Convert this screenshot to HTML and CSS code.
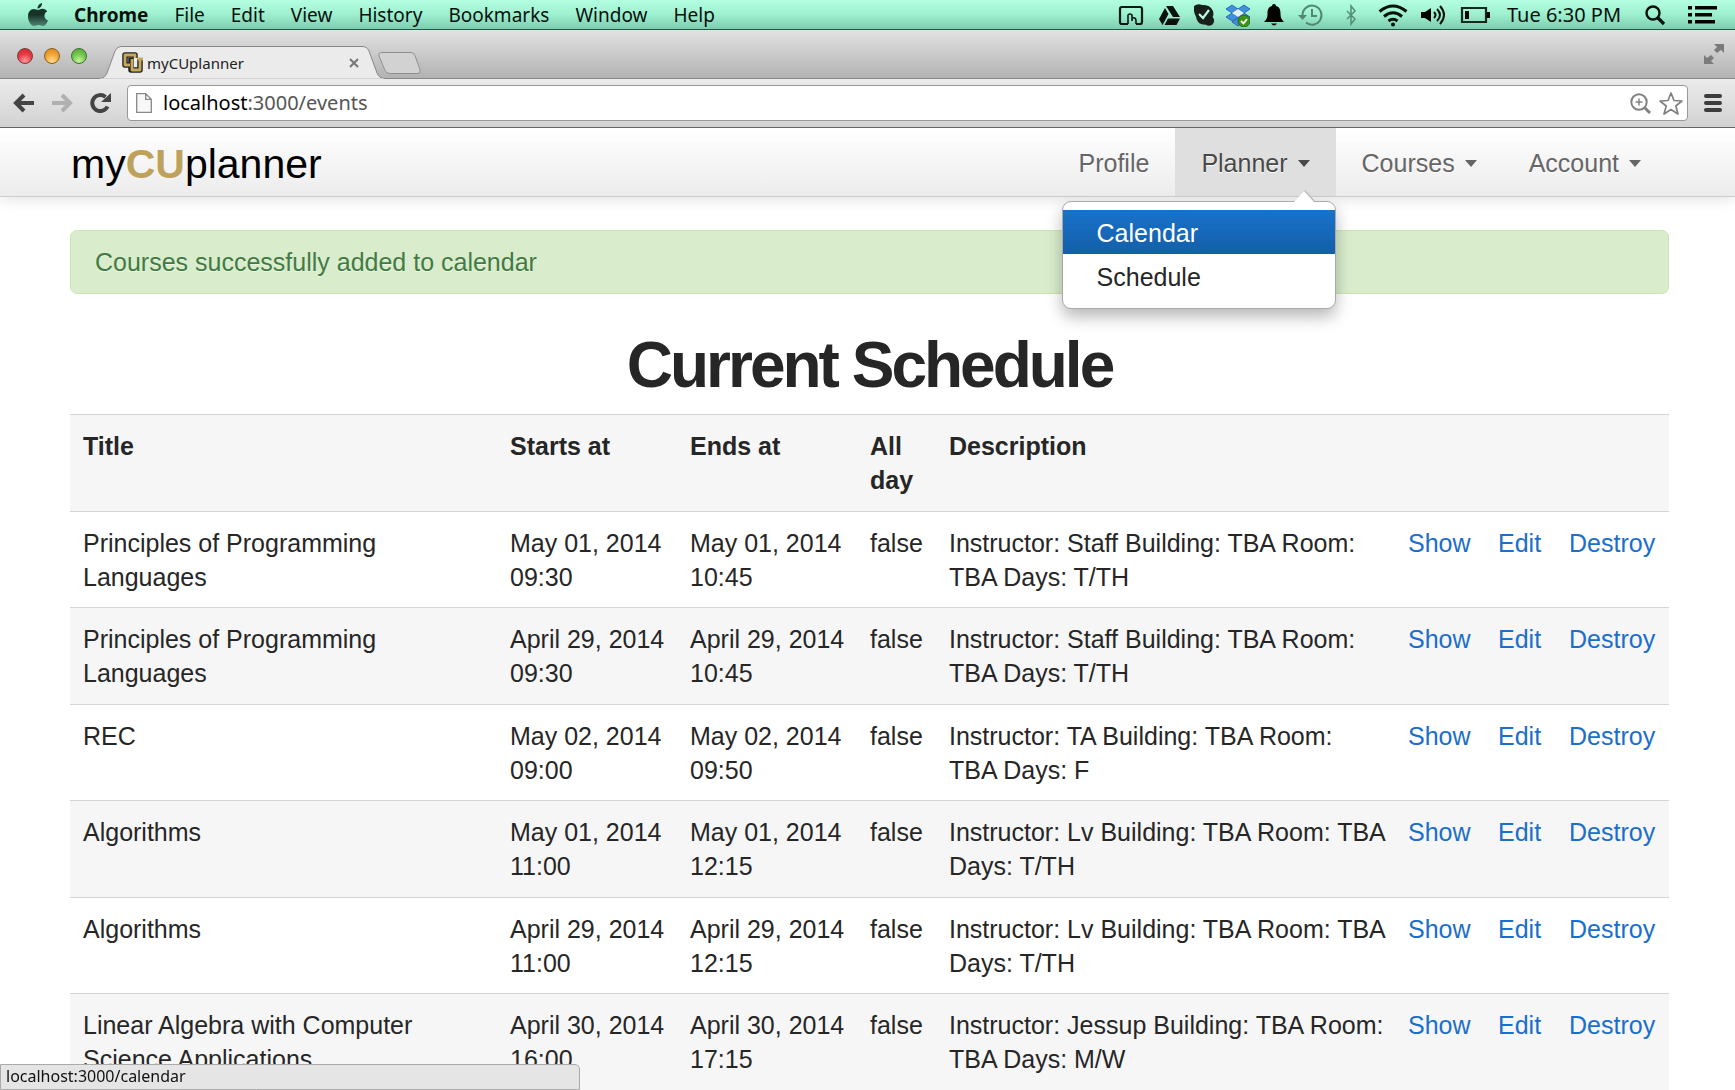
FILE: index.html
```html
<!DOCTYPE html>
<html lang="en">
<head>
<meta charset="utf-8">
<title>myCUplanner</title>
<link rel="stylesheet" href="styles.css">
</head>
<body>
<div class="menubar">
  <svg class="apple" width="22" height="24" viewBox="0 0 22 24"><defs><linearGradient id="ag" x1="0" y1="0" x2="0" y2="1"><stop offset="0" stop-color="#1d3a30"/><stop offset=".5" stop-color="#173128"/><stop offset="1" stop-color="#4d8672"/></linearGradient></defs><path fill="url(#ag)" d="M15 0c.3 3-2 5.500-4.500 5.500C10.300 3 12.500.6 15 0zM11 7c1.200 0 2.500-1.200 4.700-1.200 1.800 0 3.500 1 4.500 2.400-4 2.400-3.400 7.800.8 9.300-1 2.700-3 5.500-5 5.500-1.700 0-2.300-1-4.500-1s-2.900 1-4.500 1C3.500 23 1 17.600 1 13.500 1 8.800 3.700 6 6.700 6 8.500 6 10 7 11 7z"/></svg>
  <nav class="menus">
    <button class="app">Chrome</button><button>File</button><button>Edit</button><button>View</button><button>History</button><button>Bookmarks</button><button>Window</button><button>Help</button>
  </nav>
  <div class="tray">
    <svg width="26" height="24" viewBox="0 0 26 24" fill="none" stroke="#0b1a14"><path stroke-width="2.200" d="M10 21H4q-2 0-2-2V6q0-2 2-2h18q2 0 2 2v13q0 2-2 2h-4"/><path stroke-width="1.600" d="M10 21V12q2-2 4 0v6m0-3q4-1 4 3v3"/></svg>
    <svg width="26" height="24" viewBox="0 0 26 24" fill="#07110d"><path d="M10 3h7l7 11h-7zM9 5l3.500 6L6.500 22 3 16zM12 15.500h12L20.500 22H8.500z"/></svg>
    <svg width="20" height="24" viewBox="0 0 20 24"><path fill="#16211d" d="M0 3q4-3 8-1 8-1 11 6 1 4-.4 6Q22 18 18 22q-4 1.500-6-.3-9 .3-10-8Q-1 8 0 3z"/><path d="M5 11l4 4 6-8" fill="none" stroke="#bff6dd" stroke-width="2.200"/></svg>
    <svg width="24" height="24" viewBox="0 0 24 24"><g fill="#3f90e0" stroke="#1b5ca8" stroke-width=".8"><path d="M6 2l6 4-6 4-6-4zM18 2l6 4-6 4-6-4zM0 14l6-4 6 4-6 4zM12 14l6-4 6 4-6 4zM6 19l6-4 6 4-6 4z"/></g><path fill="#dff0fb" d="M6 10l6-4 6 4-6 4z"/><circle cx="18" cy="18" r="6" fill="#3d9416" stroke="#286b0c"/><path d="M15 18l2.500 2.500L21 16" fill="none" stroke="#fff" stroke-width="1.800"/></svg>
    <svg width="24" height="24" viewBox="0 0 24 24"><path d="M12 1q2 0 2 2c4 1 4.500 4 4.500 8 0 3 .5 5 3.500 8H2c3-3 3.500-5 3.500-8 0-4 .5-7 4.500-8q0-2 2-2zM9 20.500h6q-3 4-6 0z"/></svg>
    <svg width="26" height="24" viewBox="0 0 26 24" fill="none" stroke="#528672" stroke-width="2"><path d="M4.500 12A9.500 9.500 0 1 1 8 19.500M14 6v7h5"/><path d="M0 12h9l-4.500 5z" fill="#528672" stroke="none"/></svg>
    <svg width="30" height="24" viewBox="0 0 30 24" fill="none" stroke="#578b77" stroke-width="1.500"><path d="M11 8l8 8-4 5V3l4 5-8 8"/></svg>
    <svg width="30" height="24" viewBox="0 0 30 24" fill="none" stroke="#06110c" stroke-width="3"><path d="M1.500 8.500q13.500-11 27 0M6 13.500q9-7.500 18 0M10.500 18q4.500-3.500 9 0"/><circle cx="15" cy="21.500" r="1" stroke-width="2"/></svg>
    <svg width="26" height="24" viewBox="0 0 26 24"><path d="M1 9h4l6-4v14l-6-4H1z"/><path d="M14 9q3 3 0 6M17 6q6 6 0 12M20 3q8 9 0 18" fill="none" stroke="#06110c" stroke-width="2"/></svg>
    <svg width="34" height="24" viewBox="0 0 34 24"><path d="M4 5h24v14H4z" fill="none" stroke="#142a21" stroke-width="2.200"/><path d="M7 8h4v8H7zM29 9h3v6h-3z"/></svg>
    <span class="clock">Tue 6:30 PM</span>
    <svg width="40" height="24" viewBox="0 0 40 24" fill="none" stroke="#06110c"><circle cx="17" cy="10" r="6.500" stroke-width="2.400"/><path d="M22 15l6 6" stroke-width="3.200"/></svg>
    <svg width="29" height="24" viewBox="0 0 29 24"><path d="M0 3h4v3.500H0zM7 3h22v3.500H7zM0 10h4v3.500H0zM7 10h17v3.500H7zM0 17h4v3.500H0zM7 17h20v3.500H7z"/></svg>
  </div>
</div>

<div class="tabstrip">
  <div class="lights">
    <button class="light red" aria-label="Close window"></button><button class="light amber" aria-label="Minimize"></button><button class="light green" aria-label="Zoom"></button>
  </div>
  <div class="tab">
    <svg class="tab-shape" width="284" height="33" viewBox="0 0 284 33"><path d="M0 32.500Q5 32 7 27L15 5Q17 .5 21 .5H262Q267 .5 269 5L277 27Q279 32 284 32.500" fill="#ebebeb" stroke="#888"/><path d="M0 33h284" stroke="#ebebeb" stroke-width="1"/></svg>
    <svg width="22" height="22" viewBox="0 0 22 22"><g fill="none" stroke-linejoin="round"><path d="M13 6V3H3v10h7" stroke="#222" stroke-width="5.500"/><path d="M9 6v12h9V7" stroke="#222" stroke-width="5.500"/><path d="M13 6V3H3v10h5" stroke="#c7a95b" stroke-width="2.800"/><path d="M10 7v11h8V7M15.500 7H21" stroke="#c7a95b" stroke-width="2.800"/></g></svg>
    <span class="tab-title">myCUplanner</span>
    <button class="tab-close" aria-label="Close tab"><svg width="10" height="10" viewBox="0 0 10 10" stroke="#777" stroke-width="2"><path d="M1 1l8 8M9 1L1 9"/></svg></button>
  </div>
  <button class="newtab" aria-label="New tab"><svg width="44" height="22" viewBox="0 0 44 22"><path d="M4 .5h29q3 0 4 3l5 14q1 4-2 4H12q-4 0-5-3L1 4Q0 .5 4 .5z" fill="#d2d2d2" stroke="#8e8e8e"/></svg></button>
  <button class="full" aria-label="Full screen"><svg width="20" height="20" viewBox="0 0 20 20" fill="#7b7b7b"><path d="M10 0h10v9l-3-3-4 3-3-3 3-3zM10 20H0v-9l3 3 4-3 3 3-3 3z"/></svg></button>
</div>

<div class="toolbar">
  <button aria-label="Back"><svg width="22" height="20" viewBox="0 0 22 20" fill="none" stroke="#444" stroke-width="4"><path d="M21 10H4M11 2l-8 8 8 8"/></svg></button>
  <button aria-label="Forward"><svg width="22" height="20" viewBox="0 0 22 20" fill="none" stroke="#b0b0b0" stroke-width="4"><path d="M1 10h17M11 2l8 8-8 8"/></svg></button>
  <button aria-label="Reload"><svg width="22" height="20" viewBox="0 0 22 20"><path d="M18.500 13.500A8 8 0 1 1 16.500 4" fill="none" stroke="#444" stroke-width="4"/><path d="M22 0v9h-10z" fill="#444"/></svg></button>
  <div class="omnibox">
    <svg width="16" height="20" viewBox="0 0 16 20"><path d="M.7.700h9l5.600 5.600v13H.7zM9.700.700v5.600h5.600" fill="#f8f8f8" stroke="#888" stroke-width="1.300"/></svg>
    <div class="url" role="textbox" aria-label="Address"><span class="host">localhost</span>:3000/events</div>
    <button aria-label="Page zoom"><svg width="21" height="21" viewBox="0 0 21 21" fill="none" stroke="#828282"><circle cx="9" cy="9" r="7.700" stroke-width="2"/><path d="M5.500 9h7M9 5.500v7" stroke-width="1.500"/><path d="M14 14l6 6" stroke-width="3"/></svg></button>
    <button aria-label="Bookmark this page"><svg width="24" height="23" viewBox="0 0 24 23"><path d="M12 1l3 7.500 8 .5-6.200 5 2.200 8-7-4.500L5 22l2.200-8L1 9l8-.5z" fill="#fff" stroke="#808080" stroke-width="1.700" stroke-linejoin="round"/></svg></button>
  </div>
  <button aria-label="Browser menu"><svg width="18" height="18" viewBox="0 0 18 18" stroke="#3d3d3d" stroke-width="4" stroke-linecap="round"><path d="M2 2h14M2 9h14M2 16h14"/></svg></button>
</div>

<div class="page">
  <header class="navbar">
    <a class="brand" href="#">my<b>CU</b>planner</a>
    <nav class="links">
      <a href="#">Profile</a>
      <div class="dropdown">
        <a class="open" href="#">Planner<i class="caret"></i></a>
        <div class="menu">
          <a class="active" href="#">Calendar</a>
          <a href="#">Schedule</a>
        </div>
      </div>
      <a href="#">Courses<i class="caret"></i></a>
      <a href="#">Account<i class="caret"></i></a>
    </nav>
  </header>
  <main>
    <div class="alert">Courses successfully added to calendar</div>
    <h1>Current Schedule</h1>
    <table>
      <colgroup><col class="c-title"><col class="c-date"><col class="c-date"><col class="c-all"><col><col class="c-show"><col class="c-edit"><col class="c-destroy"></colgroup>
      <thead><tr><th>Title</th><th>Starts at</th><th>Ends at</th><th>All day</th><th>Description</th><th></th><th></th><th></th></tr></thead>
      <tbody>
        <tr><td>Principles of Programming Languages</td><td>May 01, 2014 09:30</td><td>May 01, 2014 10:45</td><td>false</td><td>Instructor: Staff Building: TBA Room:<br>TBA Days: T/TH</td><td><a href="#">Show</a></td><td><a href="#">Edit</a></td><td><a href="#">Destroy</a></td></tr>
        <tr><td>Principles of Programming Languages</td><td>April 29, 2014 09:30</td><td>April 29, 2014 10:45</td><td>false</td><td>Instructor: Staff Building: TBA Room:<br>TBA Days: T/TH</td><td><a href="#">Show</a></td><td><a href="#">Edit</a></td><td><a href="#">Destroy</a></td></tr>
        <tr><td>REC</td><td>May 02, 2014 09:00</td><td>May 02, 2014 09:50</td><td>false</td><td>Instructor: TA Building: TBA Room:<br>TBA Days: F</td><td><a href="#">Show</a></td><td><a href="#">Edit</a></td><td><a href="#">Destroy</a></td></tr>
        <tr><td>Algorithms</td><td>May 01, 2014 11:00</td><td>May 01, 2014 12:15</td><td>false</td><td>Instructor: Lv Building: TBA Room: TBA<br>Days: T/TH</td><td><a href="#">Show</a></td><td><a href="#">Edit</a></td><td><a href="#">Destroy</a></td></tr>
        <tr><td>Algorithms</td><td>April 29, 2014 11:00</td><td>April 29, 2014 12:15</td><td>false</td><td>Instructor: Lv Building: TBA Room: TBA<br>Days: T/TH</td><td><a href="#">Show</a></td><td><a href="#">Edit</a></td><td><a href="#">Destroy</a></td></tr>
        <tr><td>Linear Algebra with Computer Science Applications</td><td>April 30, 2014 16:00</td><td>April 30, 2014 17:15</td><td>false</td><td>Instructor: Jessup Building: TBA Room:<br>TBA Days: M/W</td><td><a href="#">Show</a></td><td><a href="#">Edit</a></td><td><a href="#">Destroy</a></td></tr>
      </tbody>
    </table>
  </main>
</div>
<div class="status">localhost:3000/calendar</div>
</body>
</html>
```

FILE: styles.css
```css
* { box-sizing: border-box; }
body {
  margin: 0;
  height: 100vh;
  display: flex;
  flex-direction: column;
  overflow: hidden;
  background: #fff;
  color: #262626;
  font: 25px/34px "Liberation Sans", Arial, sans-serif;
}
button { padding: 0; border: 0; background: none; color: inherit; font: inherit; display: flex; align-items: center; }
a { color: #1a6ecc; text-decoration: none; }
svg { display: block; flex: none; }

/* System menu bar */
.menubar {
  flex: none;
  height: 30px;
  display: flex;
  align-items: center;
  padding: 0 18px 0 27px;
  background: linear-gradient(#b4ffe2, #9df0cf 50%, #7dcdb0);
  border-bottom: 1px solid #1f5a45;
  color: #06110c;
  font: 20px/28px "Noto Sans", sans-serif;
}
.menus { display: flex; gap: 26px; margin-left: 25px; font-size: 19px; }
.menus .app { font-weight: 700; }
.tray { display: flex; align-items: center; gap: 12px; margin-left: auto; }
.clock { width: 120px; text-align: center; white-space: nowrap; }

/* Tab strip */
.tabstrip {
  flex: none;
  height: 49px;
  display: flex;
  padding: 0 11px 0 17px;
  background: linear-gradient(#e2e2e2, #b2b2b2);
  border-bottom: 1px solid #888;
}
.lights { display: flex; gap: 11px; margin-top: 18px; }
.light { width: 16px; height: 16px; border-radius: 50%; border: 1px solid #7a3a3a; }
.red { background: radial-gradient(circle at 50% 85%, #ff9a9a, #ea3c46 50%, #c9252f); }
.amber { background: radial-gradient(circle at 50% 85%, #ffe28a, #f2a336 50%, #d98419); border-color: #8c5f22; }
.green { background: radial-gradient(circle at 50% 85%, #c6f59a, #74c750 50%, #4ea333); border-color: #3f7130; }
.tab {
  position: relative;
  width: 284px;
  height: 33px;
  margin: 16px 0 0 13px;
  padding: 0 25px 0 22px;
  display: flex;
  align-items: center;
  gap: 3px;
  color: #222;
  font: 15px/24px "Noto Sans", sans-serif;
}
.tab > * { position: relative; }
.tab .tab-shape { position: absolute; left: 0; top: 0; }
.tab-close { margin-left: auto; }
.newtab { align-self: flex-start; margin: 22px 0 0 -6px; }
.full { margin-left: auto; height: 48px; }

/* Toolbar */
.toolbar {
  flex: none;
  height: 49px;
  display: flex;
  align-items: center;
  gap: 16px;
  padding: 0 13px;
  background: linear-gradient(#ebebeb, #d2d2d2);
  border-bottom: 1px solid #666;
}
.omnibox {
  flex: 1;
  height: 36px;
  display: flex;
  align-items: center;
  gap: 8px;
  padding: 0 4px 0 8px;
  background: #fff;
  border: 1px solid #999;
  border-radius: 4px;
}
.url { flex: 1; margin-left: 3px; color: #555; font: 20px/28px "Noto Sans", sans-serif; }
.host { color: #000; }

/* Site */
.page { flex: 1; min-height: 0; overflow: hidden; }
.navbar {
  position: relative;
  height: 69px;
  display: flex;
  justify-content: space-between;
  padding: 0 68px 0 71px;
  background: linear-gradient(#fff, #ececec);
  border-bottom: 1px solid #ccc;
  box-shadow: 0 2px 14px rgba(0, 0, 0, .12);
}
.brand { color: #000; font-size: 41px; line-height: 72px; }
.brand b { color: #bea25b; }
.links { display: flex; }
.links > a, .open { display: flex; align-items: center; height: 68px; padding: 2px 26px 0; color: #666; text-shadow: 0 1px 0 #fff; }
.links .open { background: #dfdfdf; color: #484848; }
.caret { margin: 0 0 0 10px; border: 6px solid transparent; border-top: 7px solid currentColor; border-bottom: 0; }
.dropdown { position: relative; }
.menu {
  position: absolute;
  right: 0;
  top: 73px;
  width: 274px;
  padding: 8px 0 10px;
  background: #fff;
  border: 1px solid #aaa;
  border-radius: 9px;
  box-shadow: 0 8px 16px rgba(0, 0, 0, .28);
}
.menu::before {
  content: "";
  position: absolute;
  right: 21px;
  top: -11px;
  border: 10px solid transparent;
  border-top: 0;
  border-bottom: 11px solid #fff;
  filter: drop-shadow(1px -1px 0 #bbb);
}
.menu a { display: block; padding: 6px 34px 4px; line-height: 34px; color: #262626; }
.menu .active { color: #fff; background: linear-gradient(#1872cb, #145fa8); }
main { padding: 33px 66px 0 70px; }
.alert {
  padding: 14px 24px;
  border: 1px solid #cbe6b5;
  border-radius: 7px;
  background: #d9edcc;
  color: #437a43;
  text-shadow: 0 1px 0 rgba(255, 255, 255, .5);
}
h1 { margin: 36px 0 14px; font-size: 64px; line-height: 70px; letter-spacing: -3px; text-align: center; }
table { width: 100%; table-layout: fixed; border-collapse: separate; border-spacing: 0; }
.c-title { width: 427px; }
.c-date { width: 180px; }
.c-all { width: 79px; }
.c-show { width: 90px; }
.c-edit { width: 71px; }
.c-destroy { width: 113px; }
th, td { padding: 14px 8px 14px 13px; border-top: 1px solid #d4d4d4; text-align: left; vertical-align: top; }
th { background: #f6f6f6; }
td { padding-bottom: 13px; }
tbody tr:nth-child(even) td, tbody tr:last-child td { background: #f6f6f6; }
tbody tr:nth-child(even) td { padding-bottom: 14px; }

.status {
  position: fixed;
  left: 0;
  bottom: 0;
  width: 580px;
  height: 26px;
  padding-left: 5px;
  background: #e5e5e5;
  border: 1px solid #aaa;
  border-radius: 0 5px 0 0;
  color: #111;
  font: 16px/23px "Noto Sans", sans-serif;
}
```
